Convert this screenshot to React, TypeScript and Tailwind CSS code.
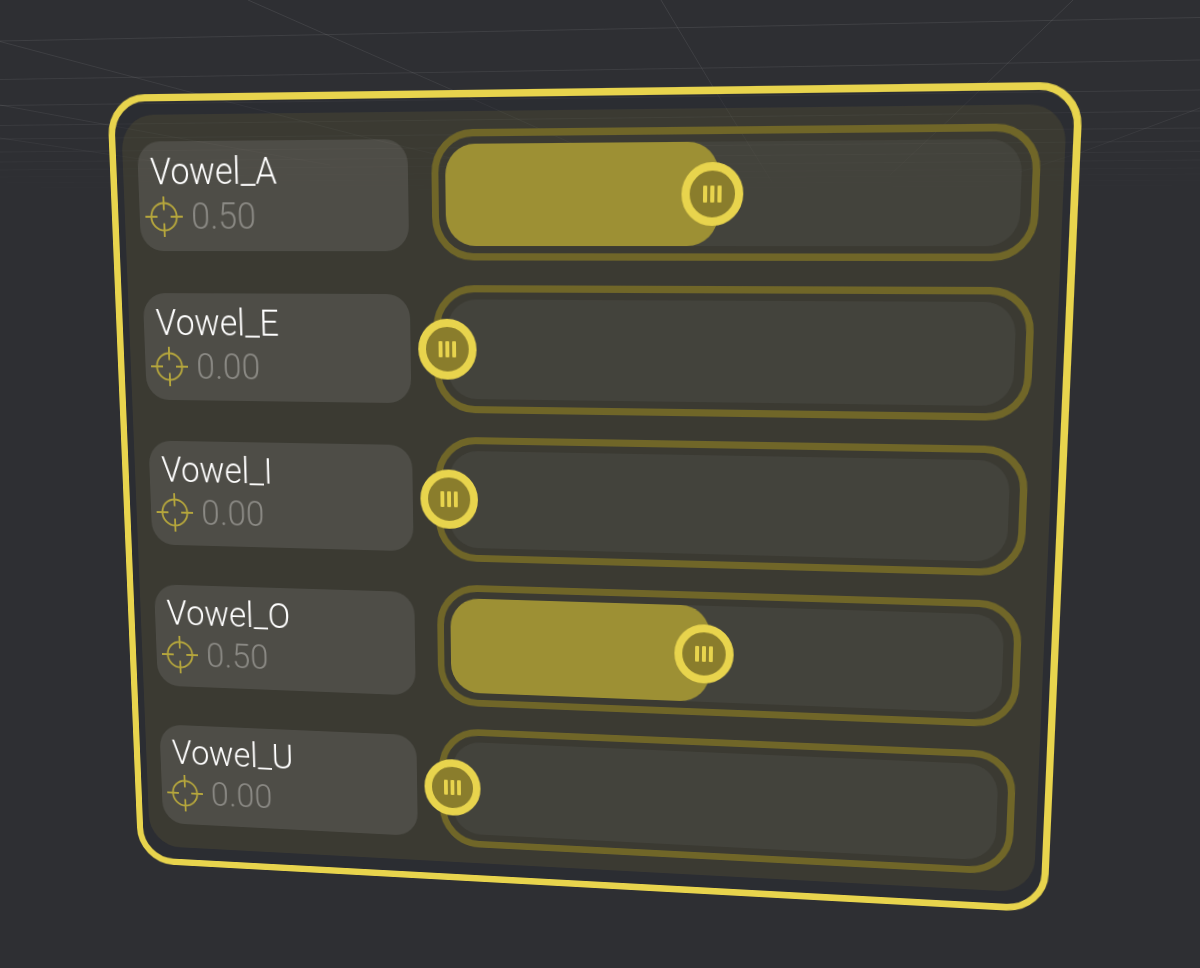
import { FC, useState } from "react";

type VowelSliderProps = {
  name: string;
  initialValue: number;
};

const vowels: VowelSliderProps[] = [
  { name: "Vowel_A", initialValue: 0.5 },
  { name: "Vowel_E", initialValue: 0 },
  { name: "Vowel_I", initialValue: 0 },
  { name: "Vowel_O", initialValue: 0.496 },
  { name: "Vowel_U", initialValue: 0 },
];

const TargetIcon: FC = () => (
  <svg
    viewBox="0 0 40 40"
    className="size-10 shrink-0"
    fill="none"
    stroke="#b5a63c"
    strokeWidth="2"
    aria-hidden="true"
  >
    <circle cx="20" cy="20" r="13.6" />
    <path d="M20 0v13.5M20 26.5v13.5M0 20h13M27 20h13" />
  </svg>
);

const FloorGrid: FC = () => (
  <svg
    viewBox="0 0 1200 200"
    preserveAspectRatio="none"
    className="absolute inset-x-0 top-0 h-[200px] w-full"
    fill="none"
    stroke="#fff"
    aria-hidden="true"
  >
    <defs>
      <linearGradient id="fade" x1="0" y1="0" x2="0" y2="200" gradientUnits="userSpaceOnUse">
        <stop offset="0" stopColor="#fff" />
        <stop offset="0.6" stopColor="#fff" stopOpacity="0.7" />
        <stop offset="1" stopColor="#fff" stopOpacity="0" />
      </linearGradient>
      <mask id="fadeMask" maskUnits="userSpaceOnUse" x="0" y="0" width="1200" height="200">
        <rect width="1200" height="200" fill="url(#fade)" stroke="none" />
      </mask>
    </defs>
    <g mask="url(#fadeMask)" strokeOpacity="0.09">
      <path d="M0 41L1200 17.5M0 79.5L1200 60M0 105.5L1200 90M0 125.5L1200 111" />
      <path d="M0 139L1200 128M0 152L1200 141M0 162L1200 151.5M0 170L1200 160" />
      <path d="M0 177L1200 168M0 183L1200 174M0 188L1200 180M0 192L1200 185" strokeOpacity="0.07" />
      <path d="M248 0L325 34L475 100L580 147M0 41.5L184 90.5L364 137L480 165M0 105L184 139L330 165M0 138L180 165" />
      <path d="M661 0L713 87L772 182M1073 0L952 117L890 175M1200 108L1082 152L1020 172" />
    </g>
  </svg>
);

const VowelSlider: FC<VowelSliderProps> = ({ name, initialValue }) => {
  const [value, setValue] = useState(initialValue);

  return (
    <div className="grid grid-cols-[282px_1fr] items-center gap-6">
      <div className="rounded-3xl bg-[#fff8ff]/10 pt-2 pb-3 pl-[6px] text-4xl leading-[44px] font-light">
        <label htmlFor={name} className="block pl-[7px] text-white">
          {name}
        </label>
        <div className="flex items-center gap-[9px]">
          <TargetIcon />
          <output htmlFor={name} className="text-[#8a8984]">
            {value.toFixed(2)}
          </output>
        </div>
      </div>

      <div className="rounded-[42px] border-7 border-[#706628] py-[7px] pr-[10px] pl-[7px]">
        <div className="relative h-[98px] rounded-[30px] bg-[#f4e8ff]/5 pr-7">
          <div className="relative h-full">
            {value > 0 && (
              <div
                className="h-full min-w-15 rounded-[30px] bg-[#9d9034]"
                style={{ width: `calc(${value * 100}% + 6px)` }}
              />
            )}
            <div
              className="absolute top-1/2 flex size-15 -translate-1/2 items-center justify-center gap-[3px] rounded-full border-8 border-[#e8d44d] bg-[#8a7d2c]"
              style={{ left: `${value * 100}%` }}
            >
              <span className="h-4 w-1 rounded-[1px] bg-[#e8d44d]" />
              <span className="h-4 w-1 rounded-[1px] bg-[#e8d44d]" />
              <span className="h-4 w-1 rounded-[1px] bg-[#e8d44d]" />
            </div>
          </div>
          <input
            id={name}
            type="range"
            min={0}
            max={1}
            step={0.001}
            value={value}
            onChange={(e) => setValue(Number(e.target.value))}
            className="absolute inset-0 h-full w-full cursor-pointer opacity-0"
          />
        </div>
      </div>
    </div>
  );
};

const App: FC = () => (
  <main className="relative flex min-h-screen items-center justify-center overflow-hidden bg-[#2e2f33] font-[Roboto,sans-serif]">
    <FloorGrid />
    <div className="w-full max-w-[968px] p-1 [transform:matrix3d(0.981057,0.019948,0,-0.00008364,-0.001904,0.998485,0,0.00008979,0,0,1,0,-25,18,0,1)]">
      <section className="rounded-[40px] border-7 border-[#e8d44d] bg-[#262730]/40 px-[7px] py-[13px]">
        <div className="flex flex-col gap-6 rounded-[34px] bg-[#dccd32]/9 py-[17px] pr-[22px] pl-4">
          {vowels.map((vowel) => (
            <VowelSlider key={vowel.name} {...vowel} />
          ))}
        </div>
      </section>
    </div>
  </main>
);

export default App;
